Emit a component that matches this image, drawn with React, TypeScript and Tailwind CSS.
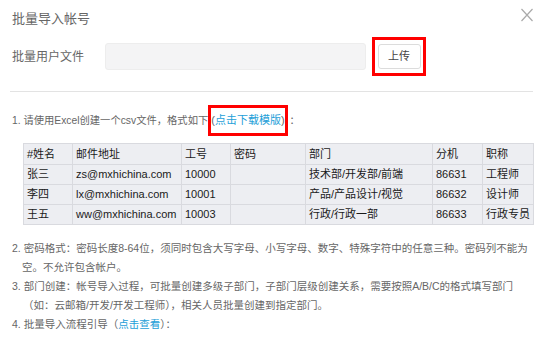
import React from 'react';

const cols = [
  { name: '#姓名', w: 'w-[49px]' },
  { name: '邮件地址', w: 'w-[109px]' },
  { name: '工号', w: 'w-[49px]' },
  { name: '密码', w: 'w-[75px]' },
  { name: '部门', w: 'w-[127px]' },
  { name: '分机', w: 'w-[50px]' },
  { name: '职称', w: 'w-[51px]' },
];

const rows = [
  ['张三', 'zs@mxhichina.com', '10000', '', '技术部/开发部/前端', '86631', '工程师'],
  ['李四', 'lx@mxhichina.com', '10001', '', '产品/产品设计/视觉', '86632', '设计师'],
  ['王五', 'ww@mxhichina.com', '10003', '', '行政/行政一部', '86633', '行政专员'],
];

export default function App() {
  return (
    <div
      className="relative w-[546px] h-[344px] overflow-hidden bg-white px-[12px]"
      style={{ fontFamily: '"Liberation Sans", "Noto Sans CJK SC", sans-serif' }}
    >
      {/* header */}
      <div className="pt-[11px] text-[13px] leading-[15px] text-[#666]">批量导入帐号</div>
      <button className="absolute top-[8px] right-[13px] text-[#aaa]">
        <svg width="12" height="14" viewBox="0 0 12 14" fill="none" stroke="currentColor" strokeWidth="1.2">
          <path d="M0.5 1L11.5 13M11.5 1L0.5 13" />
        </svg>
      </button>

      {/* upload row */}
      <div className="mt-[11px] flex items-center">
        <span className="w-[93px] text-[12px] text-[#666]">批量用户文件</span>
        <div className="h-[27px] w-[261px] rounded-[3px] border border-[#ededed] bg-[#f4f4f5]" />
        <div className="ml-[6px] flex h-[39px] w-[54px] items-center justify-center border-[3px] border-[#ff0000]">
          <button className="h-[25px] w-[43px] rounded-[3px] border border-[#dcdcdc] bg-white text-[11px] text-[#444]">
            上传
          </button>
        </div>
      </div>

      <div className="mt-[15px] h-px w-[523px] -ml-[2px] bg-[#e3e3e3]" />

      {/* step 1 */}
      <div className="mt-[13px] flex items-center whitespace-nowrap text-[10.3px] text-[#666]">
        <span>1. 请使用Excel创建一个csv文件，格式如下</span>
        <span className="flex h-[31px] items-center border-[3px] border-[#ff0000] text-[11px] text-[#1ea0d8]">
          <span className="text-[#666]">(</span>点击下载模版<span className="text-[#666]">)</span>
        </span>
        <span className="ml-[2px]">：</span>
      </div>

      {/* sample table */}
      <table className="mt-[7px] ml-[11px] w-[510px] table-fixed border-collapse bg-[#edeef2] text-[11px] text-[#1a1a1a]">
        <thead>
          <tr className="h-[21px]">
            {cols.map((c) => (
              <th key={c.name} className={`${c.w} border border-[#d9dadf] px-[3px] text-left font-normal`}>
                {c.name}
              </th>
            ))}
          </tr>
        </thead>
        <tbody>
          {rows.map((r) => (
            <tr key={r[0]} className="h-[20px]">
              {r.map((v, i) => (
                <td key={i} className="border border-[#d9dadf] px-[3px] whitespace-nowrap">
                  {v}
                </td>
              ))}
            </tr>
          ))}
        </tbody>
      </table>

      {/* steps 2-4 */}
      <div className="mt-[14px] whitespace-nowrap text-[10.5px] leading-[19px] text-[#666]">
        <div>2. 密码格式：密码长度8-64位，须同时包含大写字母、小写字母、数字、特殊字符中的任意三种。密码列不能为</div>
        <div className="pl-[10px]">空。不允许包含帐户。</div>
        <div>3. 部门创建：帐号导入过程，可批量创建多级子部门，子部门层级创建关系，需要按照A/B/C的格式填写部门</div>
        <div className="pl-[11px]">（如：云邮箱/开发/开发工程师），相关人员批量创建到指定部门。</div>
        <div>
          4. 批量导入流程引导（<span className="text-[#1ea0d8]">点击查看</span>）：
        </div>
      </div>
    </div>
  );
}
